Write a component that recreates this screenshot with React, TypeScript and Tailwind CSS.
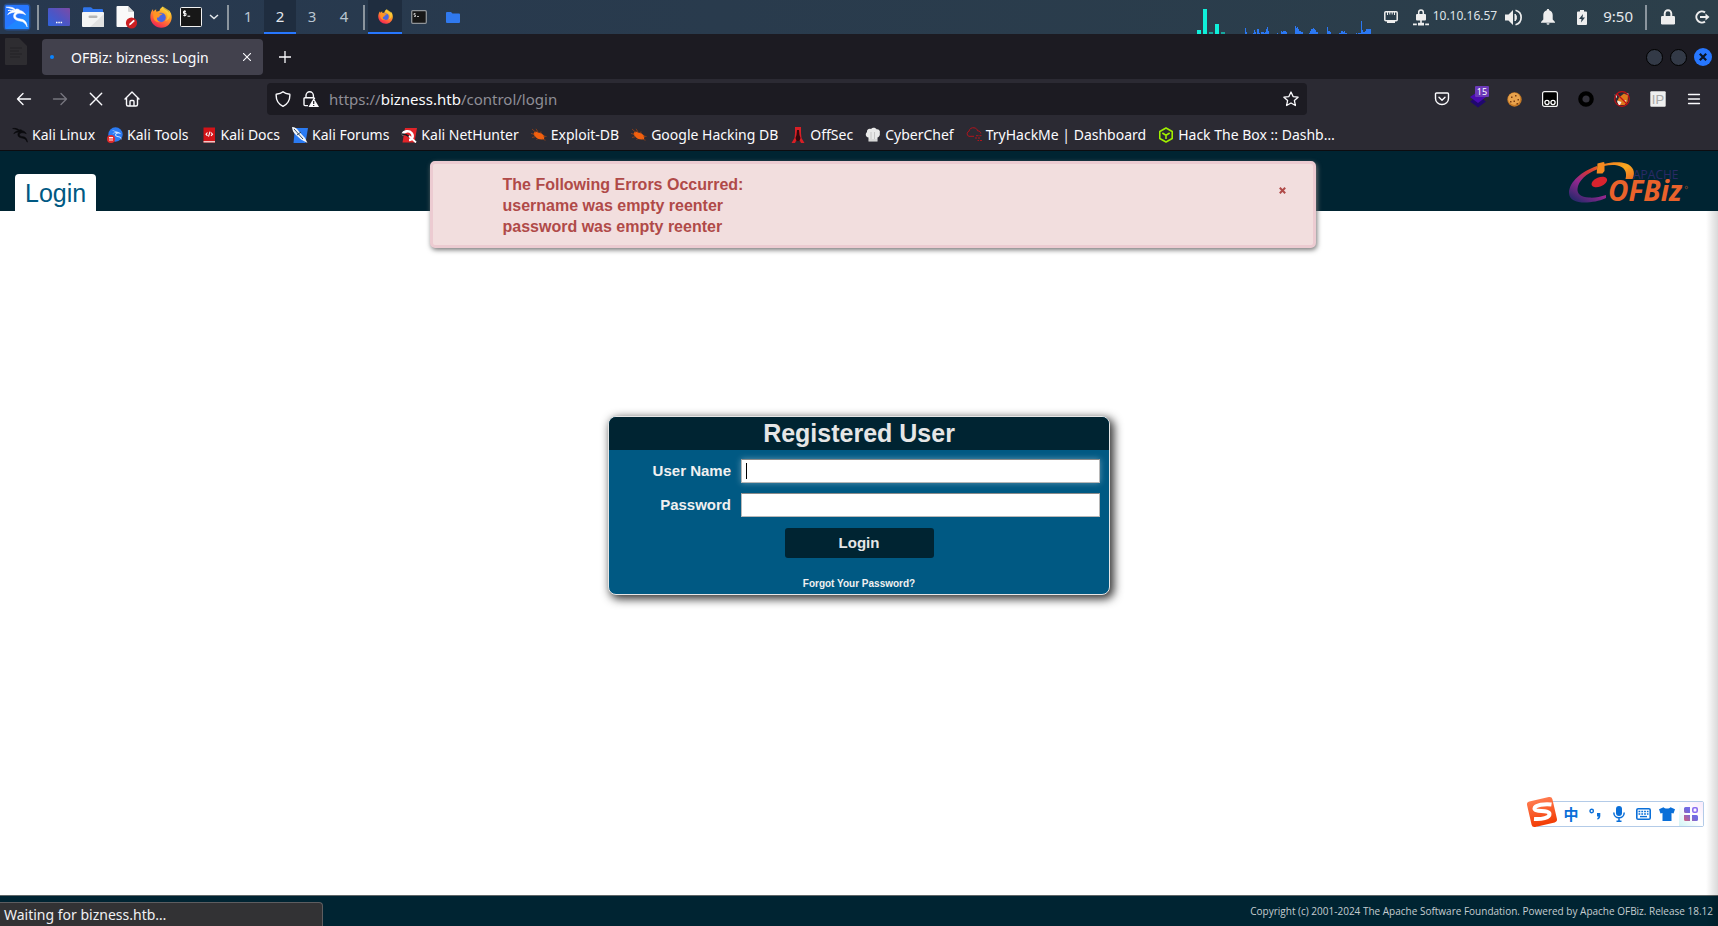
import React from 'react';
import type { ReactNode } from 'react';

/* ---------- Icons ---------- */

const dragonBody =
  'M1 2.2C4 1.6 8 2 10.4 4.4 12 3.6 13.5 4 15 5.4 17.6 6 19.4 7.4 20.6 9.8 18.8 8.8 17.4 8.4 15.8 8.4 12.6 8 10 9.6 10.8 11.8 11.6 13.8 15 13.6 18 14.6 20.8 15.8 22 18.4 22.2 22 20.6 18.6 18.6 16.6 16 16.2 12.4 15.8 8.8 14.8 8.6 11.6 8.4 9.8 9.2 8.2 10.8 7.2 7.6 7.4 4.6 8 2.6 9.8 4 7 7 5.6 9.8 5.6 7.2 3.6 4.2 2.8 1 2.2Z';

function KaliMenuIcon() {
  return (
    <svg width="28" height="28" viewBox="-2 -2 28 28" aria-hidden="true">
      <rect x="-1.5" y="-1.5" width="27" height="27" rx="4" fill="#2777ff" opacity="0.35" />
      <rect width="24" height="24" rx="1.5" fill="#2777ff" />
      <path d="M0 24 24 6V22.500a1.500 1.500 0 0 1-1.500 1.500Z" fill="#1f86ff" />
      <path d={dragonBody} fill="#fff" stroke="#fff" strokeWidth="0.5" />
      <path d="M3 5.500c2.500-.5 5 0 7 1" stroke="#fff" strokeWidth="1" fill="none" />
    </svg>
  );
}

function DesktopIcon() {
  return (
    <svg width="22" height="18" viewBox="0 0 22 18" aria-hidden="true">
      <defs>
        <linearGradient id="desk" x1="0" y1="1" x2="1" y2="0">
          <stop offset="0" stopColor="#2f63dc" />
          <stop offset="0.5" stopColor="#4e55c4" />
          <stop offset="1" stopColor="#7d4aa5" />
        </linearGradient>
      </defs>
      <rect width="22" height="18" rx="1" fill="url(#desk)" />
      <path d="M8 14.500h1.500M10.300 14.500h1.500M12.600 14.500h1.500" stroke="#fff" strokeWidth="1.500" />
    </svg>
  );
}

function FilesIcon() {
  return (
    <svg width="22" height="20" viewBox="0 0 22 20" aria-hidden="true">
      <path d="M1 1.500Q1 .3 2.200.3H9L11 2h9q1 0 1 1v4H1Z" fill="#2f74ea" />
      <rect y="5" width="22" height="15" rx="1" fill="#f4f4f4" />
      <path d="M22 7V19a1 1 0 0 1-1 1H8Z" fill="#e2e2e2" />
      <rect x="6.500" y="8.500" width="9" height="2.600" rx="1.300" fill="#b5b5b5" />
    </svg>
  );
}

function DocumentIcon() {
  return (
    <svg width="22" height="23" viewBox="0 0 22 23" aria-hidden="true">
      <path d="M1.500 0H12l6 6v14a1 1 0 0 1-1 1H1.500a1 1 0 0 1-1-1V1a1 1 0 0 1 1-1Z" fill="#fafafa" />
      <path d="M12 0v5a1 1 0 0 0 1 1h5Z" fill="#d5d5d5" />
      <circle cx="15.500" cy="17" r="5.600" fill="#cc1f22" />
      <path d="m13 19.500.6-2 4-3.800 1.200 1.200-4 3.900Z" fill="#fff" />
    </svg>
  );
}

function FirefoxIcon({ size }: { size: number }) {
  return (
    <svg width={size} height={size} viewBox="0 0 24 24" aria-hidden="true">
      <defs>
        <linearGradient id="fox" x1="0.8" y1="0" x2="0.25" y2="1">
          <stop offset="0" stopColor="#fff04a" />
          <stop offset="0.35" stopColor="#ffa726" />
          <stop offset="0.7" stopColor="#ff5a3c" />
          <stop offset="1" stopColor="#ec1b5a" />
        </linearGradient>
      </defs>
      <path
        d="M14 .5c-2.600 1.500-3.500 3.700-3.700 5-1.300.1-2.200.4-3 .8-.6-.7-.7-1.800-.5-2.800C5.500 4 4.500 5 3.800 6c-.5-.8-.5-2-.4-2.600C1.500 5.200.2 9 .4 12.500.8 19 6 23.700 12.200 23.700c6.600 0 11.500-5.100 11.500-11.400 0-3.300-1.200-6-3.200-7.800.4 1.200.5 2.200.4 3.200C19.800 4.500 14.500 4 14 .5Z"
        fill="url(#fox)"
      />
      <circle cx="12" cy="12.500" r="5.200" fill="#4b66e0" />
      <path d="M3.500 7c2.600-.6 4.500-.2 6 .6 1 .8 2.800.8 4.300.7-.2 1.300-2 1.600-3 2.200-.6.500-.3 1.200-1 1.700-.8.300-1.500 0-2 .6-.6 2 .8 4.500 4.200 4.500-4.600 1.500-8-1.500-8.300-5.300Z" fill="#ff9423" />
      <path d="M14 .5c0 3.500 4.500 5 5 9.500.3 3-1 5.500-3 6.500 6-1 7-7 4.900-11.500Z" fill="#ffcf3a" opacity=".75" />
    </svg>
  );
}

function TerminalIcon() {
  return (
    <svg width="22" height="20" viewBox="0 0 22 20" aria-hidden="true">
      <rect x=".5" y=".5" width="21" height="19" rx="1" fill="#171717" stroke="#f2f2f2" />
      <path d="M6 4.300H3.500V6.300H6V8.400H3.300M4.700 3.300V9.400M7.500 9.200h2.700" stroke="#fff" strokeWidth="1" fill="none" />
    </svg>
  );
}

function SmallTerminalIcon() {
  return (
    <svg width="16" height="14" viewBox="0 0 16 14" aria-hidden="true">
      <rect x=".7" y=".7" width="14.600" height="12.600" rx="1" fill="#171717" stroke="#8f9499" strokeWidth="1.300" />
      <path d="M4.500 3.500H3V5h1.500v1.500H3M6 6.500h2" stroke="#ddd" strokeWidth=".8" fill="none" />
    </svg>
  );
}

function CpuGraph() {
  return (
    <svg width="28" height="26" viewBox="0 0 28 26" aria-hidden="true">
      <path d="M0 22h4v4H0ZM6 1h4v25H6ZM18 16h4v10h-4Z" fill="#0ff0da" />
      <path d="M12 24h4v2h-4ZM24 24h4v2h-4Z" fill="#16a79f" />
    </svg>
  );
}

function NetGraph() {
  return (
    <svg width="128" height="26" viewBox="0 0 126 26" preserveAspectRatio="none" aria-hidden="true" shapeRendering="crispEdges">
      <path
        d="M1 20h1v4h1v2H1ZM9 26v-1h1v-3h1v2h1v2ZM13 26v-5h2v4h1v1ZM17 26v-2h3v1h1v-1h1v-3h1v-2h1v4h1v3ZM32 26v-1h1v1ZM36 26v-3h1v1h1v-1h3v1h1v2ZM50 26v-8h1v2h1v-1h1v2h1v2h2v1h2v2ZM64 26v-1h1v-2h1v-2h2v-1h1v1h1v1h1v2h2v2ZM82 26v-7h1v4h2v1h1v2ZM94 26v-1h1v-2h2v1h1v-1h1v2h2v1ZM110 26v-1h1v1ZM112 26v-1h3V13h1v9h1v2h2v-1h1v-2h5v5Z"
        fill="#2b78f4"
      />
    </svg>
  );
}

function EthernetIcon() {
  return (
    <svg width="14" height="12" viewBox="0 0 14 12" aria-hidden="true">
      <rect x=".8" y=".8" width="12.400" height="9" rx="1" fill="none" stroke="#eee" strokeWidth="1.500" />
      <path d="M3.500 1v3M5.800 1v2.500M8.200 1v2.500M10.500 1v3" stroke="#eee" strokeWidth="1" />
      <path d="M3 10h8v2H3Z" fill="#eee" />
    </svg>
  );
}

function VpnIcon() {
  return (
    <svg width="16" height="17" viewBox="0 0 16 17" aria-hidden="true">
      <path d="M5.700 5V3.300a2.300 2.300 0 0 1 4.600 0V5" fill="none" stroke="#eee" strokeWidth="1.500" />
      <rect x="3" y="5" width="10" height="6.500" rx="1" fill="#eee" />
      <path d="M7.200 11h1.600v3H7.200ZM5 13.800h6V16.500H5ZM0 14.500h3.800v1.800H0ZM12.200 14.500H16v1.800h-3.800Z" fill="#eee" />
    </svg>
  );
}

function SpeakerIcon() {
  return (
    <svg width="17" height="17" viewBox="0 0 17 17" aria-hidden="true">
      <path d="M0 5.500h3.500L8 1v15l-4.500-4.500H0Z" fill="#eee" />
      <path d="M10 5c2 1.800 2 5.200 0 7Z" fill="#eee" stroke="#eee" />
      <path d="M10.500 1.300c7.500 2 7.500 12.400 0 14.400" fill="none" stroke="#eee" strokeWidth="1.700" />
    </svg>
  );
}

function BellIcon() {
  return (
    <svg width="14" height="16" viewBox="0 0 14 16" aria-hidden="true">
      <path d="M7 0c.8 0 1.200.6 1.200 1.200C10.500 1.800 11.700 3.800 11.700 6v4.500L14 13v.8H0V13l2.300-2.500V6c0-2.200 1.200-4.200 3.500-4.800C5.800.6 6.200 0 7 0ZM5.500 14.300h3a1.500 1.500 0 0 1-3 0Z" fill="#eee" />
    </svg>
  );
}

function BatteryIcon() {
  return (
    <svg width="10" height="15" viewBox="0 0 10 15" aria-hidden="true">
      <path d="M3 0h4v1.500h2a1 1 0 0 1 1 1V14a1 1 0 0 1-1 1H1a1 1 0 0 1-1-1V2.500a1 1 0 0 1 1-1h2Z" fill="#eee" />
      <path d="M6 4 2 9h2.500L4 12.500l4-5H5.500Z" fill="#2b3e4c" />
    </svg>
  );
}

function PadlockIcon() {
  return (
    <svg width="14" height="16" viewBox="0 0 14 16" aria-hidden="true">
      <path d="M3.700 8V4.500a3.300 3.300 0 0 1 6.600 0V8" fill="none" stroke="#eee" strokeWidth="1.900" />
      <rect y="7" width="14" height="8.500" rx="1.200" fill="#eee" />
    </svg>
  );
}

function LogoutIcon() {
  return (
    <svg width="15" height="14" viewBox="0 0 15 14" aria-hidden="true">
      <path d="M10 2.300A5.600 5.600 0 1 0 10 11.700" fill="none" stroke="#eee" strokeWidth="2" />
      <path d="M5 7h6.500" stroke="#eee" strokeWidth="2" />
      <path d="M10.500 3.500 14.500 7l-4 3.500Z" fill="#eee" />
    </svg>
  );
}

function GhostFileIcon() {
  return (
    <svg width="22" height="27" viewBox="0 0 22 27" aria-hidden="true">
      <path d="M1 0h13l8 8v18a1 1 0 0 1-1 1H1a1 1 0 0 1-1-1V1a1 1 0 0 1 1-1Z" fill="#2e2d31" />
      <path d="M5 10h12M5 13h9M5 16h12M5 19h10" stroke="#232226" strokeWidth="1" />
    </svg>
  );
}

function Stroke({ d, color = '#fbfbfe', width = 1.4 }: { d: string; color?: string; width?: number }) {
  return (
    <svg width="16" height="16" viewBox="0 0 16 16" fill="none" stroke={color} strokeWidth={width} strokeLinecap="round" strokeLinejoin="round" aria-hidden="true">
      <path d={d} />
    </svg>
  );
}

function ShieldIcon() {
  return <Stroke d="M8 .8C9.800 2.500 12.200 3 14.800 3.200 15.200 8.500 13 13 8 15.300 3 13 .8 8.500 1.200 3.200 3.800 3 6.200 2.500 8 .8Z" />;
}

function LockWarningIcon() {
  return (
    <svg width="16" height="16" viewBox="0 0 16 16" fill="none" aria-hidden="true">
      <path d="M3 7V4.500a3.700 3.700 0 0 1 7.400 0V7M11.500 8V7.800a1 1 0 0 0-1-1h-8.500a1 1 0 0 0-1 1v5.800a1 1 0 0 0 1 1H5" stroke="#fbfbfe" strokeWidth="1.400" />
      <path d="M10.700 7 16 16H5.500Z" fill="#fbfbfe" />
      <path d="M10.700 10v3M10.700 14v1" stroke="#1c1b22" strokeWidth="1.200" />
    </svg>
  );
}

/* Toolbar extensions */

function LayersIcon() {
  return (
    <svg width="18" height="18" viewBox="0 0 18 18" aria-hidden="true">
      <path d="M1 11.500 9 6l8 5.500L9 17.500Z" fill="#20086f" />
      <path d="M1 7 9 1.500 17 7 9 13Z" fill="#4a0bb0" />
    </svg>
  );
}

function CookieIcon() {
  return (
    <svg width="15" height="15" viewBox="0 0 15 15" aria-hidden="true">
      <circle cx="7.500" cy="7.500" r="7.200" fill="#c67a26" />
      <circle cx="7.200" cy="6.800" r="6.100" fill="#e8a24c" />
      <path d="M4 4.500h1.500V6H4ZM8 3h1.500v1.500H8ZM10.500 7H12v1.500h-1.500ZM6.500 8.500H8V10H6.500ZM3 9h1.500v1.500H3ZM9.500 11H11v1.500H9.500Z" fill="#7a3c12" />
    </svg>
  );
}

function TamperIcon() {
  return (
    <svg width="16" height="16" viewBox="0 0 16 16" aria-hidden="true">
      <rect x=".6" y=".6" width="14.800" height="14.800" rx="2" fill="#000" stroke="#f4f4f4" strokeWidth="1.200" />
      <circle cx="5" cy="11.500" r="2.100" fill="#000" stroke="#fff" strokeWidth="1.300" />
      <circle cx="11" cy="11.500" r="2.100" fill="#000" stroke="#fff" strokeWidth="1.300" />
    </svg>
  );
}

function RingIcon() {
  return (
    <svg width="16" height="16" viewBox="0 0 16 16" aria-hidden="true">
      <circle cx="8" cy="8" r="5.700" fill="#33323b" stroke="#000" strokeWidth="4.200" />
    </svg>
  );
}

function NoFoxIcon() {
  return (
    <svg width="16" height="16" viewBox="0 0 16 16" aria-hidden="true">
      <path d="M5 6.500 10 2.500l4 2-.5 6.500-3 3H5l-2-3Z" fill="#e07a1c" />
      <path d="M3 9.500 7.500 11l-1.500 3H4.500ZM.5 3.500l2.500 1-.5 3ZM10.500 9l2 .5-1.500 2ZM12 2l2.500.5-.5 2.500Z" fill="#f4ece4" />
      <circle cx="8" cy="8" r="7.300" fill="none" stroke="#c50f14" strokeWidth="1.200" />
      <path d="m3 3 10 10" stroke="#c50f14" strokeWidth="1.200" />
    </svg>
  );
}

function IpIcon() {
  return (
    <svg width="16" height="16" viewBox="0 0 16 16" aria-hidden="true">
      <rect x=".3" y=".3" width="15.400" height="15.400" rx="1" fill="#efefef" />
      <text x="8" y="13" textAnchor="middle" fontSize="13" fontFamily="Liberation Sans, sans-serif" fill="#a8a8a8">
        IP
      </text>
    </svg>
  );
}

/* Bookmark icons, all 16x16 */

function Bookmark16({ children }: { children: ReactNode }) {
  return (
    <svg width="16" height="16" viewBox="0 0 16 16" className="shrink-0" aria-hidden="true">
      {children}
    </svg>
  );
}

const bug = (
  <g fill="#f2600f">
    <path d="M3 5.500 5 4.500 7 5.500 10 6 13.500 9 13 12 10.500 12.500 7 12 4.500 10 2.500 7.500Z" />
    <path d="M1 2 5 5.500M5 1.800 7 5M0 6.500l3.500.8M1 10.500l3.500-.8M5.500 13l1.500-2M10 4.500l-.5 2M15.500 9.500 12 9M11 12l3.500 1.200" stroke="#9c4416" strokeWidth=".8" fill="none" />
  </g>
);

const bookmarks: { label: string; icon: ReactNode }[] = [
  {
    label: 'Kali Linux',
    icon: <path d={dragonBody} transform="scale(.69)" fill="#0a0a0d" stroke="#0a0a0d" strokeWidth=".9" />,
  },
  {
    label: 'Kali Tools',
    icon: (
      <>
        <circle cx="8.500" cy="7.500" r="7.200" fill="#2b7bf3" />
        <path d={dragonBody} transform="translate(4 2.500) scale(.48)" fill="#cfe2ff" />
        <circle cx="4" cy="12" r="4" fill="#e22a2a" />
        <path d="M2 10.500h4M3 10.500v3.500M5 10.500v3.500" stroke="#fff" strokeWidth=".9" />
      </>
    ),
  },
  {
    label: 'Kali Docs',
    icon: (
      <>
        <path d="M2.500.5h11.500v15H2.500Z" fill="#d31318" />
        <path d="M2.500 14h11.500v1.500H2.500Z" fill="#f1c8c8" />
        <path d="M6.500 5.500 5 7.200l1.500 1.700M10 5.500l1.500 1.700L10 8.900M9 4.700 7.500 9.700" stroke="#fff" strokeWidth="1.100" fill="none" />
      </>
    ),
  },
  {
    label: 'Kali Forums',
    icon: (
      <>
        <path d="M3 1h13l-2.500 15H1.500Z" fill="#2b7bf3" />
        <path d="M0 0c3 0 5.500 2 7 4.500L13 11l2.500 5L9 12.500 4 8C1.500 6 .3 3 0 0Z" fill="#f3f6fa" />
        <path d="m2 2 9 10M5 8l4-3" stroke="#23384f" strokeWidth=".9" />
      </>
    ),
  },
  {
    label: 'Kali NetHunter',
    icon: (
      <>
        <path d="M4 1h12l-2.500 14.500H1.500Z" fill="#e02429" />
        <path d="M1 8c1.500-4 7-5 9.500-2S11 13 8 13" stroke="#fff" strokeWidth="2.600" fill="none" />
        <path d="M0 7c2 0 6 0 8 3" stroke="#191920" strokeWidth="1.500" fill="none" />
        <path d="m8 9 7 6.500" stroke="#fff" strokeWidth="1.800" />
      </>
    ),
  },
  { label: 'Exploit-DB', icon: bug },
  { label: 'Google Hacking DB', icon: bug },
  {
    label: 'OffSec',
    icon: (
      <>
        <path d="M5 0h6v6l.5 5 3 5H11l-1-2H6l-1 2H1.500l3-5L5 6Z" fill="#d81f26" />
        <path d="M7 3h2l.5 5 1 3-1 3h-3l-1-3 1-3Z" fill="#35080b" />
      </>
    ),
  },
  {
    label: 'CyberChef',
    icon: (
      <>
        <path d="M3.500 10.500C.5 10 0 6.500 2 5c-.5-2.500 2-4 4-3C7.500.3 10.500.3 11.500 2.300c2.500-.3 4 1.700 3.300 3.700.5 2.500-.8 4-2.300 4.500V14.500h-9Z" fill="#e9e9e9" />
        <path d="M6 5v7M9.500 5v7M4 13h8" stroke="#bdbdbd" strokeWidth=".8" />
      </>
    ),
  },
  {
    label: 'TryHackMe | Dashboard',
    icon: (
      <>
        <path d="M8 9.300H3A2.600 2.600 0 0 1 3 4.300C3.300 1.500 6 .5 8 .8c2 .2 3.300 1.500 3.500 3 2 0 3.300 1.300 3.300 2.700" stroke="#b3141d" strokeWidth="1" fill="none" />
        <path d="M10 8.700h2.500M13.500 8.700h2M9 11h2M12 11h2M11.500 13.500H13M14 13.500h2" stroke="#b3141d" strokeWidth="1" />
      </>
    ),
  },
  {
    label: 'Hack The Box :: Dashb…',
    icon: (
      <path d="M8 1 14.200 4.500v7L8 15 1.800 11.500v-7ZM4.300 6 8 8.200 11.700 6M8 8.200V12" stroke="#9fef00" strokeWidth="1.600" fill="none" strokeLinejoin="round" />
    ),
  },
];

/* ---------- Desktop panel ---------- */

function PanelSeparator() {
  return <span className="block h-[25px] w-[2px] shrink-0 bg-[#8b959e]" />;
}

const iconButton = 'flex shrink-0 items-center justify-center';

function DesktopPanel() {
  return (
    <div className="flex h-[34px] items-center bg-linear-to-r from-[#27384f] to-[#2c3f4a] text-[15px] text-[#e4e8ec]">
      <button aria-label="Applications" className={iconButton + ' ml-[3px] w-[28px]'}><KaliMenuIcon /></button>
      <div className="ml-[6px]"><PanelSeparator /></div>
      <button aria-label="Show desktop" className={iconButton + ' ml-[4px] w-[32px]'}><DesktopIcon /></button>
      <button aria-label="Files" className={iconButton + ' ml-[1px] w-[34px]'}><FilesIcon /></button>
      <button aria-label="Text editor" className={iconButton + ' w-[34px]'}><DocumentIcon /></button>
      <button aria-label="Firefox" className={iconButton + ' w-[34px]'}><FirefoxIcon size={22} /></button>
      <button aria-label="Terminal" className={iconButton + ' w-[26px]'}><TerminalIcon /></button>
      <button aria-label="More terminals" className={iconButton + ' w-[20px]'}>
        <svg width="10" height="6" viewBox="0 0 10 6" fill="none" stroke="#e4e8ec" strokeWidth="1.500" aria-hidden="true"><path d="m1 1 4 3.500L9 1" /></svg>
      </button>
      <div className="ml-[3px]"><PanelSeparator /></div>
      <div className="ml-[3px] flex h-full">
        {['1', '2', '3', '4'].map((n) => (
          <button
            key={n}
            className={
              n === '2'
                ? 'h-full w-[32px] border-b-2 border-[#2777ff] bg-[#1f2d3f]'
                : 'h-full w-[32px] pb-[2px] text-[#b9c6d2]'
            }
          >
            {n}
          </button>
        ))}
      </div>
      <div className="ml-[3px]"><PanelSeparator /></div>
      <button aria-label="Firefox window" className={iconButton + ' ml-[3px] h-full w-[34px] border-b-2 border-[#2777ff] bg-[#1f2d3f]'}><FirefoxIcon size={15} /></button>
      <button aria-label="Terminal window" className={iconButton + ' h-full w-[34px]'}><SmallTerminalIcon /></button>
      <button aria-label="Files window" className={iconButton + ' h-full w-[34px]'}>
        <svg width="14" height="11" viewBox="0 0 14 11" aria-hidden="true"><path d="M0 1q0-1 1-1h4l1.500 1.500H13q1 0 1 1V10q0 1-1 1H1q-1 0-1-1Z" fill="#3079ee" /></svg>
      </button>

      <div className="ml-auto flex h-full items-center pr-[8px]">
        <div className="flex h-full items-end gap-[19px]">
          <CpuGraph />
          <NetGraph />
        </div>
        <span className="ml-[12px]"><EthernetIcon /></span>
        <span className="ml-[15px]"><VpnIcon /></span>
        <span className="ml-[4px] pb-[2px] text-[12px] text-[#dfe4e8]">10.10.16.57</span>
        <span className="ml-[8px]"><SpeakerIcon /></span>
        <span className="ml-[19px]"><BellIcon /></span>
        <span className="ml-[22px]"><BatteryIcon /></span>
        <time className="ml-[16px] pb-[2px] text-[15px]">9:50</time>
        <span className="ml-[12px]"><PanelSeparator /></span>
        <button aria-label="Lock screen" className="ml-[14px]"><PadlockIcon /></button>
        <button aria-label="Log out" className="ml-[20px]"><LogoutIcon /></button>
      </div>
    </div>
  );
}

/* ---------- Browser chrome ---------- */

function TabStrip() {
  return (
    <div className="flex h-[45px] items-center bg-[#1c1b22] pl-[5px] pr-[6px] pt-[1px] text-[#fbfbfe]">
      <div className="-mt-[12px]"><GhostFileIcon /></div>
      <div className="ml-[15px] flex h-[36px] w-[221px] items-center rounded-[4px] bg-[#42414d] px-[8px]">
        <span className="size-[4px] rounded-full bg-[#0a84ff]" />
        <span className="ml-[17px] flex-1 whitespace-nowrap text-[14px]">OFBiz: bizness: Login</span>
        <button aria-label="Close tab" className="flex size-[16px] items-center justify-center">
          <svg width="8" height="8" viewBox="0 0 8 8" stroke="#fbfbfe" strokeWidth="1.100" aria-hidden="true"><path d="m0 0 8 8M8 0 0 8" /></svg>
        </button>
      </div>
      <button aria-label="New tab" className="ml-[15px] flex size-[13px] items-center justify-center">
        <svg width="12" height="12" viewBox="0 0 12 12" stroke="#fbfbfe" strokeWidth="1.300" aria-hidden="true"><path d="M0 6h12M6 0v12" /></svg>
      </button>
      <div className="ml-auto flex items-center gap-[7px]">
        <button aria-label="Minimize" className="size-[17px] rounded-full border border-black bg-[#333a47]" />
        <button aria-label="Maximize" className="size-[17px] rounded-full border border-black bg-[#333a47]" />
        <button aria-label="Close window" className="flex size-[18px] items-center justify-center rounded-full bg-[#2777ff]">
          <svg width="8" height="8" viewBox="0 0 8 8" stroke="#0b1526" strokeWidth="2.200" aria-hidden="true"><path d="m.8.8 6.400 6.400M7.200.8.8 7.200" /></svg>
        </button>
      </div>
    </div>
  );
}

function NavBar() {
  const nav = 'flex h-[32px] w-[36px] items-center justify-center';
  const ext = 'relative flex h-[32px] w-[36px] items-center justify-center';
  return (
    <div className="flex h-[40px] items-center bg-[#2b2a33] px-[6px]">
      <button aria-label="Back" className={nav}><Stroke d="M14.500 8H1.500M7 2.500 1.500 8 7 13.500" /></button>
      <button aria-label="Forward" className={nav}><Stroke color="#76757e" d="M1.500 8h13M9 2.500 14.500 8 9 13.500" /></button>
      <button aria-label="Stop" className={nav}><Stroke d="m2.300 2.300 11.400 11.400M13.700 2.300 2.300 13.700" /></button>
      <button aria-label="Home" className={nav}><Stroke d="M1 8 8 1l7 7M2.500 7v6.500q0 1.500 1.500 1.500h8q1.500 0 1.500-1.500V7M6 15v-4.500q0-1 1-1h2q1 0 1 1V15" /></button>
      <div className="mx-[117px] flex h-[32px] flex-1 items-center rounded-[4px] bg-[#1c1b22] px-[8px]">
        <ShieldIcon />
        <span className="ml-[12px]"><LockWarningIcon /></span>
        <span className="ml-[10px] flex-1 text-[15px] text-[#8f8e96]">
          https://<span className="text-[#fbfbfe]">bizness.htb</span>/control/login
        </span>
        <button aria-label="Bookmark this page">
          <Stroke width={1.3} d="m8 1 2.100 4.600 5 .6-3.700 3.400 1 4.900L8 12l-4.400 2.500 1-4.900L.9 6.200l5-.6Z" />
        </button>
      </div>
      <button aria-label="Save to Pocket" className={ext}>
        <Stroke d="M2.500 2h11q1 0 1 1v4.500a6.500 6 0 0 1-13 0V3q0-1 1-1ZM5 6.300l3 2.900 3-2.900" />
      </button>
      <button aria-label="Layers extension" className={ext}>
        <LayersIcon />
        <span className="absolute left-[15px] top-[3px] flex h-[11px] w-[14px] items-center justify-center rounded-[1px] bg-[#6b39b8] text-[9px] text-white">15</span>
      </button>
      <button aria-label="Cookie editor" className={ext}><CookieIcon /></button>
      <button aria-label="Scripts" className={ext}><TamperIcon /></button>
      <button aria-label="Ring extension" className={ext}><RingIcon /></button>
      <button aria-label="Proxy toggle" className={ext}><NoFoxIcon /></button>
      <button aria-label="IP extension" className={ext}><IpIcon /></button>
      <button aria-label="Menu" className={ext}><Stroke width={1.3} d="M2.500 3.500h11M2.500 8h11M2.500 12.500h11" /></button>
    </div>
  );
}

function BookmarksBar() {
  return (
    <nav className="flex h-[32px] items-center gap-[12px] border-b border-[#0d0c10] bg-[#2b2a33] pl-[12px] text-[14px] text-[#fbfbfe]">
      {bookmarks.map((b) => (
        <a key={b.label} href="#" className="flex items-center gap-[4px] whitespace-nowrap">
          <Bookmark16>{b.icon}</Bookmark16>
          {b.label}
        </a>
      ))}
    </nav>
  );
}

/* ---------- Page ---------- */

function OfbizLogo() {
  return (
    <svg width="124" height="60" viewBox="0 -7 124 60" role="img" aria-label="Apache OFBiz">
      <defs>
        <linearGradient id="swoosh" x1="0.9" y1="0" x2="0.3" y2="1">
          <stop offset="0" stopColor="#f0701f" />
          <stop offset="0.3" stopColor="#d0343a" />
          <stop offset="0.6" stopColor="#92278f" />
          <stop offset="1" stopColor="#30286e" />
        </linearGradient>
        <linearGradient id="arc" x1="0" y1="0" x2="1" y2="1">
          <stop offset="0" stopColor="#f0791f" />
          <stop offset="0.5" stopColor="#f8a91f" />
          <stop offset="1" stopColor="#ee6a24" />
        </linearGradient>
      </defs>
      <path d="M29 8C14 13 1 24 1 35c0 7 8 10 18 9.500 8-.5 15-2.500 19-4.500v-3c-6 2-12 3-17 2.500C13 39 9 36 9.500 31 10 23 19 15 29 11.500Z" fill="url(#swoosh)" />
      <path d="M36 6C43 4 52 3.500 58 5.500 65 8 68 14 64.500 21H57.500c2-7-1-12-8-13.500-5-.8-9-.3-13.500.500Z" fill="url(#arc)" />
      <path d="m29.500 5.500 6-1.500 1 .8V13L34.500 15.500H28.700Z" fill="#f58a20" />
      <ellipse cx="31.300" cy="24" rx="8.300" ry="4.500" transform="rotate(-22 31.300 24)" fill="#d8232e" />
      <text x="65" y="21" fontSize="12" fontFamily="Open Sans, sans-serif" fill="#2a2a66">APACHE</text>
      <text x="40" y="43" fontSize="28" fontWeight="700" fontStyle="italic" fontFamily="Open Sans, sans-serif" fill="#e9622b">OFBiz</text>
      <circle cx="118.500" cy="29.500" r="1.200" fill="none" stroke="#a0502f" strokeWidth=".7" />
    </svg>
  );
}

function ErrorNotice() {
  return (
    <div
      role="alert"
      className="absolute left-1/4 top-[10px] flex min-h-[87px] w-[calc(50%+27px)] justify-between rounded-[5px] border-[3px] border-[#eccbd1] bg-[#f2dede] pl-[70px] pr-[27px] pt-[10px] font-['Liberation_Sans',sans-serif] text-[16px] font-bold leading-[21px] text-[#b04a48] shadow-[1px_2px_5px_#777]"
    >
      <div>
        <p>The Following Errors Occurred:</p>
        <p>username was empty reenter</p>
        <p>password was empty reenter</p>
      </div>
      <button aria-label="Dismiss" className="mt-[13px] flex size-[7px] items-center justify-center">
        <svg width="7" height="7" viewBox="0 0 7 7" stroke="#b04a48" strokeWidth="2" aria-hidden="true"><path d="m.8.8 5.400 5.400M6.200.8.8 6.200" /></svg>
      </button>
    </div>
  );
}

function LoginCard() {
  const field = 'h-[24px] w-full border border-[#b8b8b8] border-t-[#8a8a8a] bg-white px-[4px] text-[15px] text-black outline-none';
  return (
    <form
      onSubmit={(e) => e.preventDefault()}
      className="w-[502px] overflow-hidden rounded-[8px] border border-[#e6e6e6] bg-[#005983] font-['Liberation_Sans',sans-serif] font-bold text-[#f0f0f0] shadow-[3px_3px_10px_1px_#333]"
    >
      <h2 className="h-[33px] bg-[#002432] text-center text-[25px] leading-[33px] text-[#e6e6e6]">Registered User</h2>
      <div className="grid grid-cols-[122px_1fr] items-center gap-x-[10px] gap-y-[10px] pr-[9px] pt-[9px] text-[15px]">
        <label htmlFor="user" className="text-right">User Name</label>
        <div className="relative">
          <input id="user" type="text" className={field + ' block shadow-[0_0_6px_#5c93ae]'} />
          <span className="absolute left-[5px] top-[4px] h-[16px] w-px bg-black" />
        </div>
        <label htmlFor="pass" className="text-right">Password</label>
        <input id="pass" type="password" className={field} />
      </div>
      <div className="mt-[11px] flex flex-col items-center">
        <button type="submit" className="h-[30px] w-[149px] rounded-[3px] bg-[#002432] text-[15px] text-[#e6e6e6]">Login</button>
        <a href="#" className="mb-[4px] mt-[19px] text-[10px] leading-[13px]">Forgot Your Password?</a>
      </div>
    </form>
  );
}

function InputMethodBar() {
  const blue = '#0a6fd8';
  const cell = 'flex h-full w-[24px] items-center justify-center';
  return (
    <div className="absolute bottom-[99px] right-[14px] flex h-[26px] w-[168px] items-center justify-end rounded-[2px] border border-[#b3cbe8] bg-white">
      <svg width="33" height="32" viewBox="0 0 33 32" className="absolute -left-[11px] -top-[6px]" aria-hidden="true">
        <defs>
          <linearGradient id="sogou" x1="0" y1="0" x2="0" y2="1">
            <stop offset="0" stopColor="#ff7a4e" />
            <stop offset="1" stopColor="#f23d05" />
          </linearGradient>
        </defs>
        <rect x="3" y="3" width="26" height="26" rx="3" fill="url(#sogou)" transform="rotate(-13 16 16)" />
        <path d="M25.500 8.500C19 7.500 9 9 8.500 12.500 8.500 16.500 23 13.500 23.500 18c.3 4-8 5.500-15.500 5" fill="none" stroke="#fff" strokeWidth="4" />
      </svg>
      <button aria-label="Chinese mode" className={cell + " font-['Noto_Sans_CJK_SC',sans-serif] text-[15px] font-bold leading-[20px] text-[#0a6fd8]"}>中</button>
      <button aria-label="Punctuation" className={cell}>
        <svg width="12" height="12" viewBox="0 0 12 12" aria-hidden="true">
          <circle cx="2.700" cy="3" r="1.700" fill="none" stroke={blue} strokeWidth="1.400" />
          <path d="M8 5h3.300v3c0 2-1.300 3.300-3 3.500V10c.8-.3 1.200-.8 1.200-1.500H8Z" fill={blue} />
        </svg>
      </button>
      <button aria-label="Voice input" className={cell}>
        <svg width="12" height="16" viewBox="0 0 12 16" aria-hidden="true">
          <rect x="3" width="6" height="10" rx="3" fill={blue} />
          <path d="M.8 6.500c0 7 10.400 7 10.400 0M6 12v4M3.500 15.200h5" stroke={blue} strokeWidth="1.500" fill="none" />
        </svg>
      </button>
      <button aria-label="Keyboard" className={cell}>
        <svg width="15" height="12" viewBox="0 0 15 12" aria-hidden="true">
          <rect x=".8" y=".8" width="13.400" height="10.400" rx="1.300" fill="#fff" stroke={blue} strokeWidth="1.600" />
          <path d="M2.500 3.500h10M2.500 6h10" stroke={blue} strokeWidth="1.400" strokeDasharray="1.800 1" />
          <path d="M4 8.600h7" stroke={blue} strokeWidth="1.400" />
        </svg>
      </button>
      <button aria-label="Skins" className={cell}>
        <svg width="16" height="14" viewBox="0 0 16 14" aria-hidden="true">
          <path d="M4.500.3C5.500 2 10.500 2 11.500.3L16 2.300 14.500 6.500 12.500 6v8h-9V6L1.500 6.500 0 2.300Z" fill={blue} />
        </svg>
      </button>
      <button aria-label="Toolbox" className={cell + ' bg-linear-to-tr from-[#d3f4f6] via-white to-[#f8e9fb]'}>
        <svg width="14" height="14" viewBox="0 0 14 14" aria-hidden="true">
          <defs>
            <linearGradient id="apps" x1="0" y1="1" x2="1" y2="0">
              <stop offset="0" stopColor="#d4617c" />
              <stop offset="0.5" stopColor="#6f6be0" />
              <stop offset="1" stopColor="#8a6cf0" />
            </linearGradient>
          </defs>
          <path d="M1.500 0H6v6H1.500A1.500 1.500 0 0 1 0 4.500v-3A1.500 1.500 0 0 1 1.500 0ZM0 8h6v6H1.500A1.500 1.500 0 0 1 0 12.500ZM8 8h4.500A1.500 1.500 0 0 1 14 9.500v3a1.500 1.500 0 0 1-1.500 1.500H8Z" fill="url(#apps)" />
          <rect x="8.800" y=".8" width="4.400" height="4.400" rx="1.200" fill="none" stroke="#8a6cf0" strokeWidth="1.600" />
        </svg>
      </button>
    </div>
  );
}

export default function App() {
  return (
    <div className="flex min-h-screen flex-col bg-white font-['Noto_Sans',sans-serif]">
      <DesktopPanel />
      <TabStrip />
      <NavBar />
      <BookmarksBar />
      <div className="relative flex flex-1 flex-col">
        <header className="relative z-10 flex h-[60px] items-end justify-between bg-[#002432] pl-[15px] pr-[26px]">
          <a href="#" className="flex h-[37px] items-center rounded-t-[4px] bg-white px-[10px] pt-[2px] font-['Liberation_Sans',sans-serif] text-[25px] text-[#005983]">Login</a>
          <OfbizLogo />
          <ErrorNotice />
        </header>
        <main className="flex flex-1 flex-col items-center pt-[205px]">
          <LoginCard />
        </main>
        <footer className="relative flex h-[31px] items-center justify-end border-t border-[#5f6668] bg-[#002432] pr-[5px] text-[#c5cdd1]">
          <p className="font-['Open_Sans',sans-serif] text-[10px]">Copyright (c) 2001-2024 The Apache Software Foundation. Powered by Apache OFBiz. Release 18.12</p>
          <div className="absolute bottom-0 left-0 flex h-[24px] w-[323px] items-center rounded-tr-[4px] border-r border-t border-[#5d5d60] bg-[#323234] pl-[4px] text-[14px] text-[#f0f0f2]">
            Waiting for bizness.htb…
          </div>
        </footer>
        <InputMethodBar />
        <div className="pointer-events-none absolute inset-y-0 right-0 w-[12px] bg-linear-to-r from-transparent to-black/15" />
      </div>
    </div>
  );
}
